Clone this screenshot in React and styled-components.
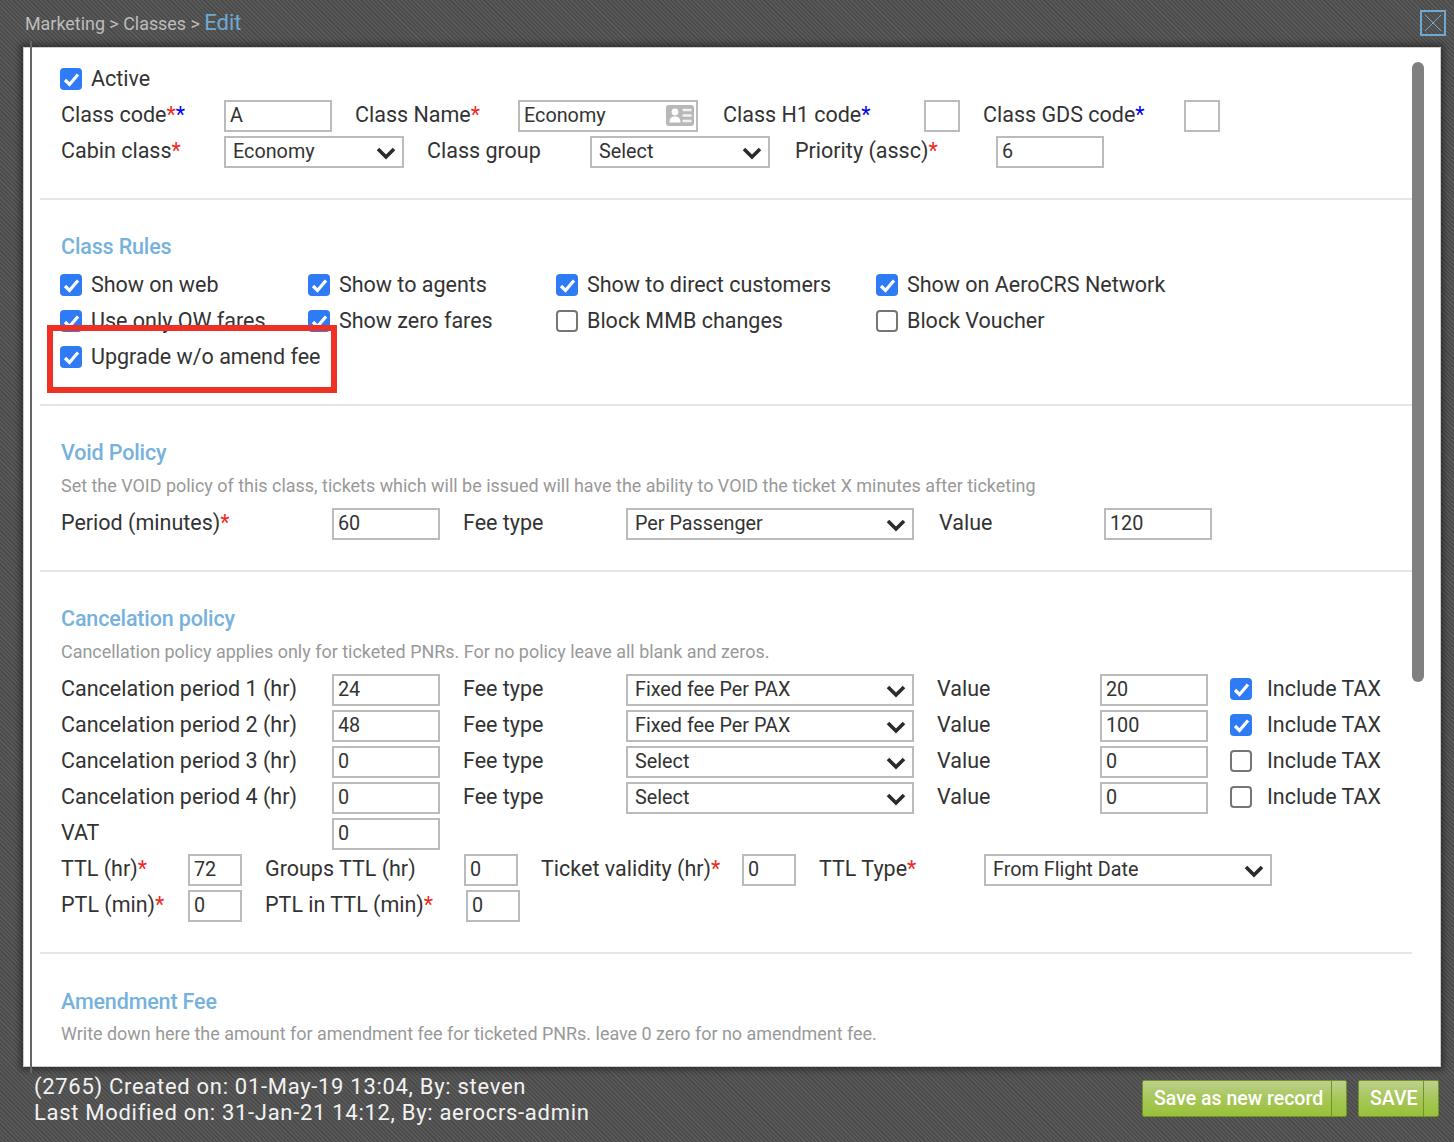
import React from 'react';
import styled, { createGlobalStyle } from 'styled-components';

const GlobalStyle = createGlobalStyle`
  html, body {
    margin: 0;
    padding: 0;
    font-family: Roboto, "Liberation Sans", sans-serif;
    background: #505050;
  }
`;

const Page = styled.div`
  width: 1454px;
  height: 1142px;
  overflow: hidden;
  display: flex;
  flex-direction: column;
  background: repeating-linear-gradient(45deg, #4b4b4b 0, #4b4b4b 1.5px, #595959 1.5px, #595959 3px);
`;

const Header = styled.div`
  height: 47px;
  flex: none;
  box-sizing: border-box;
  padding: 9px 8px 0 25px;
  display: flex;
  align-items: flex-start;
  justify-content: space-between;
`;

const Crumbs = styled.div`
  font-size: 17.9px;
  line-height: 28px;
  color: #bdbdbd;
`;

const CrumbCurrent = styled.span`
  font-size: 22px;
  color: #6fa9d2;
`;

const CloseIcon = styled.svg`
  width: 26px;
  height: 26px;
  margin-top: 1px;
`;

const Modal = styled.div`
  position: relative;
  flex: none;
  width: 1418px;
  height: 1020px;
  margin-left: 23px;
  box-sizing: border-box;
  background: #fff;
  border: 1px solid #ccc;
  box-shadow: 0 0 6px 3px rgba(0, 0, 0, 0.4);
  color: #333;

  &::before {
    content: '';
    position: absolute;
    left: 6px;
    top: -7px;
    bottom: -7px;
    width: 2px;
    background: #666;
  }
`;

const Scroller = styled.div`
  height: 100%;
  overflow: hidden;
  padding: 0 28px 0 16px;
`;

const ScrollThumb = styled.div`
  position: absolute;
  top: 14px;
  right: 16px;
  width: 12px;
  height: 620px;
  border-radius: 6px;
  background: #808080;
`;

const Highlight = styled.div`
  position: absolute;
  left: 23px;
  top: 277px;
  width: 290px;
  height: 68px;
  box-sizing: border-box;
  border: 6px solid #ee3124;
`;

const Section = styled.section`
  padding: ${(p) => p.$top || 0}px 0 ${(p) => p.$bottom || 0}px 21px;
  border-bottom: ${(p) => (p.$last ? 'none' : '2px solid #e6e6e6')};
`;

const Title = styled.h3`
  margin: 0 0 ${(p) => p.$gap || 0}px;
  height: 28px;
  font-size: 21.5px;
  font-weight: 500;
  line-height: 28px;
  letter-spacing: -0.15px;
  color: #76b2dc;
`;

const Hint = styled.p`
  margin: ${(p) => p.$mt || 5}px 0 6px;
  height: 28px;
  font-size: 17.96px;
  line-height: 28px;
  color: #999;
`;

const Row = styled.div`
  display: flex;
  align-items: center;
  height: 36px;
  margin-bottom: ${(p) => p.$mb || 0}px;
`;

const Label = styled.label`
  flex: none;
  width: ${(p) => p.$w}px;
  margin-left: ${(p) => p.$ml || 0}px;
  margin-bottom: 2px;
  font-size: 21.5px;
  line-height: 32px;
  white-space: nowrap;
`;

const Star = styled.span`
  color: ${(p) => (p.$blue ? '#0000f0' : '#f0281e')};
`;

const TextInput = styled.input`
  flex: none;
  width: ${(p) => p.$w}px;
  height: 32px;
  box-sizing: border-box;
  padding: 0 4px 2px;
  border: 2px solid #bbb;
  border-radius: 0;
  outline: none;
  background: #fff;
  font-family: inherit;
  font-size: 19.8px;
  color: #333;
`;

const InputWrap = styled.div`
  position: relative;
  flex: none;
  display: flex;
`;

const CardIcon = styled.svg`
  position: absolute;
  right: 4px;
  top: 5px;
  width: 28px;
  height: 21px;
`;

const SelectWrap = styled.div`
  position: relative;
  flex: none;
  width: ${(p) => p.$w}px;
  height: 32px;
`;

const SelectBox = styled.select`
  appearance: none;
  width: 100%;
  height: 100%;
  box-sizing: border-box;
  padding: 0 30px 2px 7px;
  border: 2px solid #bbb;
  border-radius: 0;
  outline: none;
  background: #fff;
  font-family: inherit;
  font-size: 19.8px;
  color: #333;
`;

const Chevron = styled.svg`
  position: absolute;
  right: 8px;
  top: 10px;
  width: 20px;
  height: 14px;
  pointer-events: none;
`;

const RulesGrid = styled.div`
  display: grid;
  grid-template-columns: 248px 248px 320px 1fr;
  grid-auto-rows: 36px;
  align-items: center;
`;

const CheckRow = styled.label`
  display: flex;
  align-items: center;
  margin-left: ${(p) => (p.$ml === undefined ? -1 : p.$ml)}px;
  margin-bottom: ${(p) => p.$mb || 0}px;
  gap: ${(p) => p.$gap || 9}px;
  font-size: 21.5px;
  line-height: 32px;
  white-space: nowrap;
`;

const CheckBox = styled.span`
  flex: none;
  width: 22px;
  height: 22px;
  box-sizing: border-box;
  border-radius: 4px;
  display: flex;
  align-items: center;
  justify-content: center;
  background: ${(p) => (p.$on ? '#2f7bf5' : '#fff')};
  border: ${(p) => (p.$on ? 'none' : '2px solid #767676')};
`;

const Footer = styled.div`
  flex: 1;
  display: flex;
  justify-content: space-between;
  padding: 7px 15px 0 34px;
`;

const Meta = styled.div`
  font-size: 22px;
  line-height: 26px;
  letter-spacing: 0.7px;
  color: #f2f2f2;
`;

const Buttons = styled.div`
  display: flex;
  gap: 11px;
  padding-top: 6px;
`;

const SaveButton = styled.button`
  width: ${(p) => p.$w}px;
  height: 37px;
  box-sizing: border-box;
  display: flex;
  padding: 0;
  border: 1px solid #6f9526;
  border-radius: 2px;
  background: linear-gradient(to bottom, #bdd08f 0%, #a8c75c 45%, #98c238 100%);
  color: #fff;
  font-family: inherit;
  font-size: 19.5px;
  font-weight: 500;
  line-height: 36px;
`;

const ButtonText = styled.span`
  flex: 1;
  padding-left: 11px;
  text-align: left;
  white-space: nowrap;
`;

const ButtonEnd = styled.span`
  width: 14px;
  border-left: 1px solid #6f9526;
`;

const Check = () => (
  <svg width="17" height="15" viewBox="0 0 17 15">
    <path d="M2 8 L6.5 12.5 L15 2.5" fill="none" stroke="#fff" strokeWidth="3.2" />
  </svg>
);

const Checkbox = ({ on, children, ...rest }) => (
  <CheckRow {...rest}>
    <CheckBox $on={on}>{on && <Check />}</CheckBox>
    {children}
  </CheckRow>
);

const Select = ({ w, value }) => (
  <SelectWrap $w={w}>
    <SelectBox defaultValue={value}>
      <option>{value}</option>
    </SelectBox>
    <Chevron viewBox="0 0 20 14">
      <path d="M2 3 L10 11 L18 3" fill="none" stroke="#2b2b2b" strokeWidth="3.6" />
    </Chevron>
  </SelectWrap>
);

const cancelRows = [
  { label: 'Cancelation period 1 (hr)', period: '24', fee: 'Fixed fee Per PAX', value: '20', tax: true },
  { label: 'Cancelation period 2 (hr)', period: '48', fee: 'Fixed fee Per PAX', value: '100', tax: true },
  { label: 'Cancelation period 3 (hr)', period: '0', fee: 'Select', value: '0', tax: false },
  { label: 'Cancelation period 4 (hr)', period: '0', fee: 'Select', value: '0', tax: false },
];

const rules = [
  ['Show on web', true],
  ['Show to agents', true],
  ['Show to direct customers', true],
  ['Show on AeroCRS Network', true],
  ['Use only OW fares', true],
  ['Show zero fares', true],
  ['Block MMB changes', false],
  ['Block Voucher', false],
  ['Upgrade w/o amend fee', true],
];

export default function App() {
  return (
    <Page>
      <GlobalStyle />
      <Header>
        <Crumbs>
          Marketing &gt; Classes &gt; <CrumbCurrent>Edit</CrumbCurrent>
        </Crumbs>
        <CloseIcon viewBox="0 0 26 26">
          <rect x="1" y="1" width="24" height="24" fill="none" stroke="#6fa9d2" strokeWidth="2" />
          <path d="M5 5 L21 21 M21 5 L5 21" stroke="#6fa9d2" strokeWidth="1" />
        </CloseIcon>
      </Header>

      <Modal>
        <Scroller>
          <Section $top={13} $bottom={28}>
            <Row $mb={1}>
              <Checkbox on>Active</Checkbox>
            </Row>
            <Row>
              <Label $w={163}>
                Class code<Star>*</Star>
                <Star $blue>*</Star>
              </Label>
              <TextInput $w={108} defaultValue="A" />
              <Label $w={163} $ml={23}>
                Class Name<Star>*</Star>
              </Label>
              <InputWrap>
                <TextInput $w={180} defaultValue="Economy" />
                <CardIcon viewBox="0 0 28 21">
                  <rect width="28" height="21" rx="3" fill="#b8b8b8" />
                  <circle cx="9" cy="7" r="3.4" fill="#fff" />
                  <path d="M3.5 17.5 C3.5 12.5 6 11.5 9 11.5 C12 11.5 14.5 12.5 14.5 17.5 Z" fill="#fff" />
                  <path d="M16.5 5 H25.5 M16.5 10.5 H25.5 M16.5 16 H25.5" stroke="#f2f2f2" strokeWidth="2.6" />
                </CardIcon>
              </InputWrap>
              <Label $w={201} $ml={25}>
                Class H1 code<Star $blue>*</Star>
              </Label>
              <TextInput $w={36} />
              <Label $w={201} $ml={23}>
                Class GDS code<Star $blue>*</Star>
              </Label>
              <TextInput $w={36} />
            </Row>
            <Row>
              <Label $w={163}>
                Cabin class<Star>*</Star>
              </Label>
              <Select w={180} value="Economy" />
              <Label $w={163} $ml={23}>
                Class group
              </Label>
              <Select w={180} value="Select" />
              <Label $w={201} $ml={25}>
                Priority (assc)<Star>*</Star>
              </Label>
              <TextInput $w={108} defaultValue="6" />
            </Row>
          </Section>

          <Section $top={33} $bottom={29}>
            <Title $gap={6}>Class Rules</Title>
            <RulesGrid>
              {rules.map(([text, on]) => (
                <Checkbox key={text} on={on}>
                  {text}
                </Checkbox>
              ))}
            </RulesGrid>
          </Section>

          <Section $top={33} $bottom={28}>
            <Title>Void Policy</Title>
            <Hint>Set the VOID policy of this class, tickets which will be issued will have the ability to VOID the ticket X minutes after ticketing</Hint>
            <Row>
              <Label $w={271}>
                Period (minutes)<Star>*</Star>
              </Label>
              <TextInput $w={108} defaultValue="60" />
              <Label $w={163} $ml={23}>
                Fee type
              </Label>
              <Select w={288} value="Per Passenger" />
              <Label $w={165} $ml={25}>
                Value
              </Label>
              <TextInput $w={108} defaultValue="120" />
            </Row>
          </Section>

          <Section $top={33} $bottom={28}>
            <Title>Cancelation policy</Title>
            <Hint>Cancellation policy applies only for ticketed PNRs. For no policy leave all blank and zeros.</Hint>
            {cancelRows.map((row) => (
              <Row key={row.label}>
                <Label $w={271}>{row.label}</Label>
                <TextInput $w={108} defaultValue={row.period} />
                <Label $w={163} $ml={23}>
                  Fee type
                </Label>
                <Select w={288} value={row.fee} />
                <Label $w={163} $ml={23}>
                  Value
                </Label>
                <TextInput $w={108} defaultValue={row.value} />
                <Checkbox on={row.tax} $ml={22} $gap={15} $mb={2}>
                  Include TAX
                </Checkbox>
              </Row>
            ))}
            <Row>
              <Label $w={271}>VAT</Label>
              <TextInput $w={108} defaultValue="0" />
            </Row>
            <Row>
              <Label $w={127}>
                TTL (hr)<Star>*</Star>
              </Label>
              <TextInput $w={54} defaultValue="72" />
              <Label $w={199} $ml={23}>
                Groups TTL (hr)
              </Label>
              <TextInput $w={54} defaultValue="0" />
              <Label $w={201} $ml={23}>
                Ticket validity (hr)<Star>*</Star>
              </Label>
              <TextInput $w={54} defaultValue="0" />
              <Label $w={165} $ml={23}>
                TTL Type<Star>*</Star>
              </Label>
              <Select w={288} value="From Flight Date" />
            </Row>
            <Row>
              <Label $w={127}>
                PTL (min)<Star>*</Star>
              </Label>
              <TextInput $w={54} defaultValue="0" />
              <Label $w={201} $ml={23}>
                PTL in TTL (min)<Star>*</Star>
              </Label>
              <TextInput $w={54} defaultValue="0" />
            </Row>
          </Section>

          <Section $top={34} $last>
            <Title>Amendment Fee</Title>
            <Hint $mt={4}>Write down here the amount for amendment fee for ticketed PNRs. leave 0 zero for no amendment fee.</Hint>
          </Section>
        </Scroller>
        <ScrollThumb />
        <Highlight />
      </Modal>

      <Footer>
        <Meta>
          (2765) Created on: 01-May-19 13:04, By: steven
          <br />
          Last Modified on: 31-Jan-21 14:12, By: aerocrs-admin
        </Meta>
        <Buttons>
          <SaveButton $w={205}>
            <ButtonText>Save as new record</ButtonText>
            <ButtonEnd />
          </SaveButton>
          <SaveButton $w={81}>
            <ButtonText>SAVE</ButtonText>
            <ButtonEnd />
          </SaveButton>
        </Buttons>
      </Footer>
    </Page>
  );
}
